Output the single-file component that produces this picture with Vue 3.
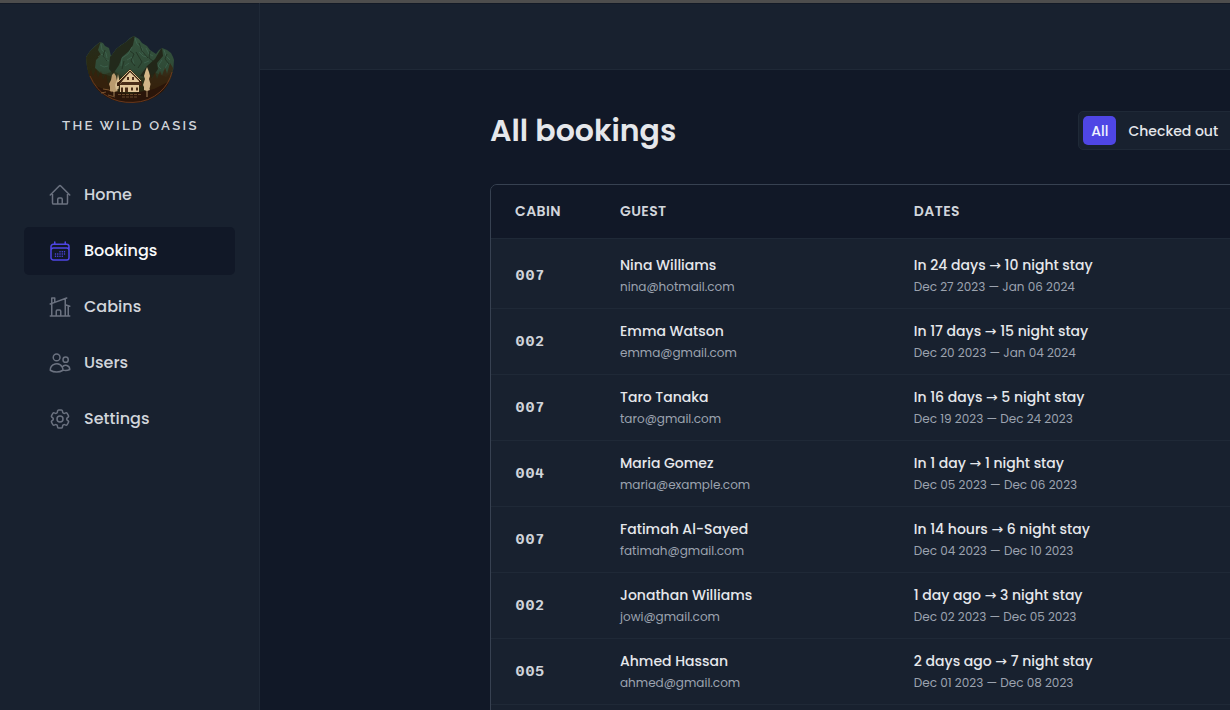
<script setup>
import { ref } from 'vue'

const current = ref('Bookings')

const nav = [
  { label: 'Home', paths: ['M2.25 12l8.954-8.955c.44-.439 1.152-.439 1.591 0L21.75 12M4.5 9.75v10.125c0 .621.504 1.125 1.125 1.125H9.75v-4.875c0-.621.504-1.125 1.125-1.125h2.25c.621 0 1.125.504 1.125 1.125V21h4.125c.621 0 1.125-.504 1.125-1.125V9.75M8.25 21h8.25'] },
  { label: 'Bookings', paths: ['M6.75 3v2.25M17.25 3v2.25M3 18.75V7.5a2.25 2.25 0 012.25-2.25h13.5A2.25 2.25 0 0121 7.5v11.25m-18 0A2.25 2.25 0 005.25 21h13.5A2.25 2.25 0 0021 18.75m-18 0v-7.5A2.25 2.25 0 015.25 9h13.5A2.25 2.25 0 0121 11.25v7.5m-9-6h.008v.008H12v-.008zM12 15h.008v.008H12V15zm0 2.25h.008v.008H12v-.008zM9.75 15h.008v.008H9.75V15zm0 2.25h.008v.008H9.75v-.008zM7.5 15h.008v.008H7.5V15zm0 2.25h.008v.008H7.5v-.008zm6.75-4.5h.008v.008h-.008v-.008zm0 2.25h.008v.008h-.008V15zm0 2.25h.008v.008h-.008v-.008zm2.25-4.5h.008v.008H16.5v-.008zm0 2.25h.008v.008H16.5V15z'] },
  { label: 'Cabins', paths: ['M8.25 21v-4.875c0-.621.504-1.125 1.125-1.125h2.25c.621 0 1.125.504 1.125 1.125V21m0 0h4.5V3.545M12.75 21h7.5V10.75M2.25 21h1.5m18 0h-18M2.25 9l4.5-1.636M18.75 3l-1.5.545m0 6.205l3 1m1.5.5l-1.5-.5M6.75 7.364V3h-3v18m3-13.636l10.5-3.819'] },
  { label: 'Users', paths: ['M15 19.128a9.38 9.38 0 002.625.372 9.337 9.337 0 004.121-.952 4.125 4.125 0 00-7.533-2.493M15 19.128v-.003c0-1.113-.285-2.16-.786-3.07M15 19.128v.106A12.318 12.318 0 018.624 21c-2.331 0-4.512-.645-6.374-1.766l-.001-.109a6.375 6.375 0 0111.964-3.07M12 6.375a3.375 3.375 0 11-6.75 0 3.375 3.375 0 016.75 0zm8.25 2.25a2.625 2.625 0 11-5.25 0 2.625 2.625 0 015.25 0z'] },
  { label: 'Settings', paths: ['M9.594 3.94c.09-.542.56-.94 1.11-.94h2.593c.55 0 1.02.398 1.11.94l.213 1.281c.063.374.313.686.645.87.074.04.147.083.22.127.324.196.72.257 1.075.124l1.217-.456a1.125 1.125 0 011.37.49l1.296 2.247a1.125 1.125 0 01-.26 1.431l-1.003.827c-.293.24-.438.613-.431.992a6.759 6.759 0 010 .255c-.007.378.138.75.43.99l1.005.828c.424.35.534.954.26 1.43l-1.298 2.247a1.125 1.125 0 01-1.369.491l-1.217-.456c-.355-.133-.75-.072-1.076.124a6.57 6.57 0 01-.22.128c-.331.183-.581.495-.644.869l-.213 1.28c-.09.543-.56.941-1.11.941h-2.594c-.55 0-1.02-.398-1.11-.94l-.213-1.281c-.062-.374-.312-.686-.644-.87a6.52 6.52 0 01-.22-.127c-.325-.196-.72-.257-1.076-.124l-1.217.456a1.125 1.125 0 01-1.369-.49l-1.297-2.247a1.125 1.125 0 01.26-1.431l1.004-.827c.292-.24.437-.613.43-.992a6.932 6.932 0 010-.255c.007-.378-.138-.75-.43-.99l-1.004-.828a1.125 1.125 0 01-.26-1.43l1.297-2.247a1.125 1.125 0 011.37-.491l1.216.456c.356.133.751.072 1.076-.124.072-.044.146-.087.22-.128.332-.183.582-.495.644-.869l.214-1.281z', 'M15 12a3 3 0 11-6 0 3 3 0 016 0z'] },
]

const bookings = [
  { cabin: '007', guest: 'Nina Williams', email: 'nina@hotmail.com', stay: 'In 24 days → 10 night stay', dates: 'Dec 27 2023 — Jan 06 2024' },
  { cabin: '002', guest: 'Emma Watson', email: 'emma@gmail.com', stay: 'In 17 days → 15 night stay', dates: 'Dec 20 2023 — Jan 04 2024' },
  { cabin: '007', guest: 'Taro Tanaka', email: 'taro@gmail.com', stay: 'In 16 days → 5 night stay', dates: 'Dec 19 2023 — Dec 24 2023' },
  { cabin: '004', guest: 'Maria Gomez', email: 'maria@example.com', stay: 'In 1 day → 1 night stay', dates: 'Dec 05 2023 — Dec 06 2023' },
  { cabin: '007', guest: 'Fatimah Al-Sayed', email: 'fatimah@gmail.com', stay: 'In 14 hours → 6 night stay', dates: 'Dec 04 2023 — Dec 10 2023' },
  { cabin: '002', guest: 'Jonathan Williams', email: 'jowi@gmail.com', stay: '1 day ago → 3 night stay', dates: 'Dec 02 2023 — Dec 05 2023' },
  { cabin: '005', guest: 'Ahmed Hassan', email: 'ahmed@gmail.com', stay: '2 days ago → 7 night stay', dates: 'Dec 01 2023 — Dec 08 2023' },
]
</script>

<template>
  <div class="app">
    <aside class="sidebar">
      <div class="logo">
        <svg class="emblem" viewBox="84 34 92 72" aria-hidden="true">
          <defs>
            <linearGradient id="slope" x1="0" y1="0" x2="0" y2="1">
              <stop offset="0" stop-color="#35543f" />
              <stop offset=".5" stop-color="#2f4a36" />
              <stop offset=".75" stop-color="#30280f" />
              <stop offset="1" stop-color="#291509" />
            </linearGradient>
            <linearGradient id="shade" x1="0" y1="0" x2="0" y2="1">
              <stop offset="0" stop-color="#262c1b" />
              <stop offset=".5" stop-color="#2b2810" />
              <stop offset="1" stop-color="#35190a" />
            </linearGradient>
            <clipPath id="bowl">
              <path d="M86 57L90 51 95 46 100 42 103 43 105 46 109 48 111 56 116 49 121 45 126 42 130 38 134 36 139 39 142 43 147 46 150 50 156 54 159 50 162 48 167 50 171 53 173 57 174 60Q174 79 163 91 151 102 134 103 114 104 100 92 87 80 86 57z" />
            </clipPath>
          </defs>
          <g clip-path="url(#bowl)">
            <path fill="url(#slope)" d="M84 34h92v72H84z" />
            <path fill="url(#shade)" d="M84 60L90 51 101 41 98 50 101 55 96 60 95 68 100 73 110 76 122 80V106H84z" />
            <path fill="#22291b" d="M110 57L117 48 127 41 135 35 133 45 129 51 122 57 119 65 113 74 109 69z" />
            <path fill="#222719" d="M140 76L147 66 155 59 162 47 163 56 157 63 158 69 152 78z" />
            <path fill="#2a2a14" opacity=".5" d="M84 72L94 67 103 75 114 71 124 78H143L156 73 166 77 176 69V106H84z" />
            <g fill="none" stroke="#497460" stroke-width=".8" opacity=".6">
              <path d="M101 44l1 6 4 3 1 5M98 57l4-3 3 5 4 2M135 38l2 6 5 4 1 6M132 47l-4 7-6 4-1 8M139 52l4 4 4 1M127 60l5-3 2 7M146 48l3 6 4 2M164 50l2 6 4 4M162 60l-4 6 3 3M168 63l-4 7M125 66l4-3M144 63l5-2M100 65l4 2 4-1" />
            </g>
            <g fill="none" stroke="#1e2c1e" stroke-width=".9" opacity=".8">
              <path d="M105 50l-2 6 4 5M130 51l4 3-3 7 4 5M139 43l3 8 6 7M136 52l6 10-4 6M150 51l-1 7 4 3M167 54l-2 5 4 5M124 61l-2 8" />
            </g>
            <path fill="#3b1f0b" opacity=".65" d="M84 79l3-12 2 8 2-6 2 8 3-8 2 9 3-7 2 9 3-6 2 10 4-5v27H84zM147 81l3-8 2 6 3-7 2 7 3-8 2 5 3-9 2 7 3-11 3 5-3 27-21 12z" />
            <path fill="#2a1509" d="M86 82l20 8 24 4 24-5 18-9-4 26H90z" />
          </g>
          <path fill="none" stroke="#6f3c20" stroke-width=".9" d="M90 76Q96 90 107 96 118 103 133 102.400 149 102 160 92 169 84 172 72" />
          <path fill="none" stroke="#9a6b3e" stroke-width=".7" d="M103 89l6 1 3 2M101 93l5-1M108 95l7 2" />
          <path fill="#b99a6e" d="M114 73l2 3 1 5 2 5-2 4 1 1-4 1-4-1v-4l-1-3 2-4 1-5z" />
          <path fill="#d4bb90" d="M118 74l1.500 7-1 8-2.500 1-1-5 2-5z" />
          <path fill="#d3b588" d="M147 67l2 5 1 4-1 3 1.500 5-1 5 .5 1-3 1-3-1v-3l-1-2 2-6-1-3 1.500-5z" />
          <path stroke="#c7a575" stroke-width=".8" d="M114 91v5M147 91v6" />
          <path fill="#3a200f" d="M117 83l13-14 12 13v4h-25z" />
          <path fill="#e2c69a" d="M123 80l7-8 9 9v11h-19v-8z" />
          <path fill="none" stroke="#d9b884" stroke-width="1" d="M118 82l12-12 11 11" />
          <path fill="#4b2d19" d="M119 85l3-3h18l1 3zM121 87.500h2v4.500h-2zM125 87.500h3v4.500h-3zM131 87.500h2v3h-2zM136 87.500h2v3h-2zM127 77h2v3h-2zM132 77h2v3h-2z" />
          <path stroke="#8f6a40" d="M118 94.500h23M122 97h15" stroke-dasharray="3 1" stroke-width=".6" />
        </svg>
        <div class="wordmark">THE WILD OASIS</div>
      </div>
      <nav>
        <a v-for="item in nav" :key="item.label" :class="{ active: current === item.label }" @click="current = item.label">
          <svg viewBox="0 0 24 24" aria-hidden="true"><path v-for="d in item.paths" :key="d" :d="d" /></svg>
          <span>{{ item.label }}</span>
        </a>
      </nav>
    </aside>
    <div class="page">
      <header class="topbar"></header>
      <main>
        <div class="content">
          <div class="heading">
            <h1>All bookings</h1>
            <div class="filter">
              <button class="selected">All</button>
              <button>Checked out</button>
            </div>
          </div>
          <section class="table">
            <div class="row head">
              <div>CABIN</div>
              <div>GUEST</div>
              <div>DATES</div>
            </div>
            <div class="body">
              <div v-for="(b, i) in bookings" :key="i" class="row">
                <div class="cabin">{{ b.cabin }}</div>
                <div class="stack">
                  <span>{{ b.guest }}</span>
                  <small>{{ b.email }}</small>
                </div>
                <div class="stack">
                  <span>{{ b.stay }}</span>
                  <small>{{ b.dates }}</small>
                </div>
              </div>
            </div>
          </section>
        </div>
      </main>
    </div>
  </div>
</template>

<style>
body { overflow: hidden; background: #18212f; }
</style>

<style scoped>
* { box-sizing: border-box; }
.app {
  display: grid;
  grid-template-columns: 260px 1fr;
  height: 710px;
  overflow: hidden;
  border-top: 3px solid #4d4d4d;
  box-shadow: inset 0 1px #131a26;
  color: #e5e7eb;
  background: #18212f;
  font-family: Poppins, "DejaVu Sans", sans-serif;
}
.sidebar { border-right: 1px solid #1f2937; padding: 31px 24px 0; }
.logo { display: flex; flex-direction: column; align-items: center; }
.emblem { width: 92px; height: 72px; }
.wordmark { margin-top: 9px; padding-left: 1px; width: 137px; height: 20px; font: 600 13.2px/21px Raleway, Lato, sans-serif; letter-spacing: 2.3px; color: #d1d5db; white-space: nowrap; }
nav { display: flex; flex-direction: column; gap: 8px; margin-top: 36px; }
nav a { display: flex; align-items: center; gap: 12px; width: 211px; height: 48px; padding: 0 24px; border-radius: 5px; font-size: 16px; font-weight: 500; color: #d1d5db; white-space: nowrap; cursor: pointer; }
nav span { line-height: 24px; padding-bottom: 1px; }
nav svg { flex: none; width: 24px; height: 24px; fill: none; stroke: #6b7280; stroke-width: 1.5; stroke-linecap: round; stroke-linejoin: round; }
nav .active { background: #111827; color: #f9fafb; }
nav .active svg { stroke: #4f46e5; }
.page { display: flex; flex-direction: column; min-width: 0; overflow: hidden; }
.topbar { flex: none; height: 67px; border-bottom: 1px solid #1f2937; }
main { flex: 1; min-height: 0; overflow: hidden; background: #111827; padding: 40px 0 0 230px; }
.content { width: 1200px; }
.heading { display: grid; grid-template-columns: 588.3px 520px; height: 42px; }
h1 { margin: 0; font-size: 30px; line-height: 42px; font-weight: 600; white-space: nowrap; }
.filter { display: flex; gap: 4px; height: 39px; margin-top: 1px; padding: 4px; border: 1px solid #1f2937; border-radius: 5px; background: #18212f; }
.filter button { height: 29px; padding: 1px 8px 0; border: 0; border-radius: 5px; background: none; color: #e5e7eb; font: inherit; font-size: 14px; font-weight: 500; white-space: nowrap; }
.filter .selected { background: #4f46e5; color: #eef2ff; }
.table { min-height: 600px; margin-top: 32px; border: 1px solid #374151; border-radius: 7px; overflow: hidden; background: #18212f; }
.row { display: grid; grid-template-columns: 105px 293.8px 1fr; align-items: center; height: 66px; padding-left: 24px; border-bottom: 1px solid #1f2937; white-space: nowrap; }
.head { height: 54px; background: #111827; font-size: 14px; font-weight: 600; letter-spacing: .4px; color: #d1d5db; }
.body { padding-top: 4px; }
.cabin { padding-bottom: 1px; font: 600 16px/20px Sono, "Liberation Mono", monospace; color: #d1d5db; }
.stack { display: flex; flex-direction: column; align-items: flex-start; gap: 2px; }
.stack span { font-size: 14px; line-height: 21px; font-weight: 500; }
.stack small { font-size: 12px; line-height: 18px; color: #9ca3af; }
</style>
